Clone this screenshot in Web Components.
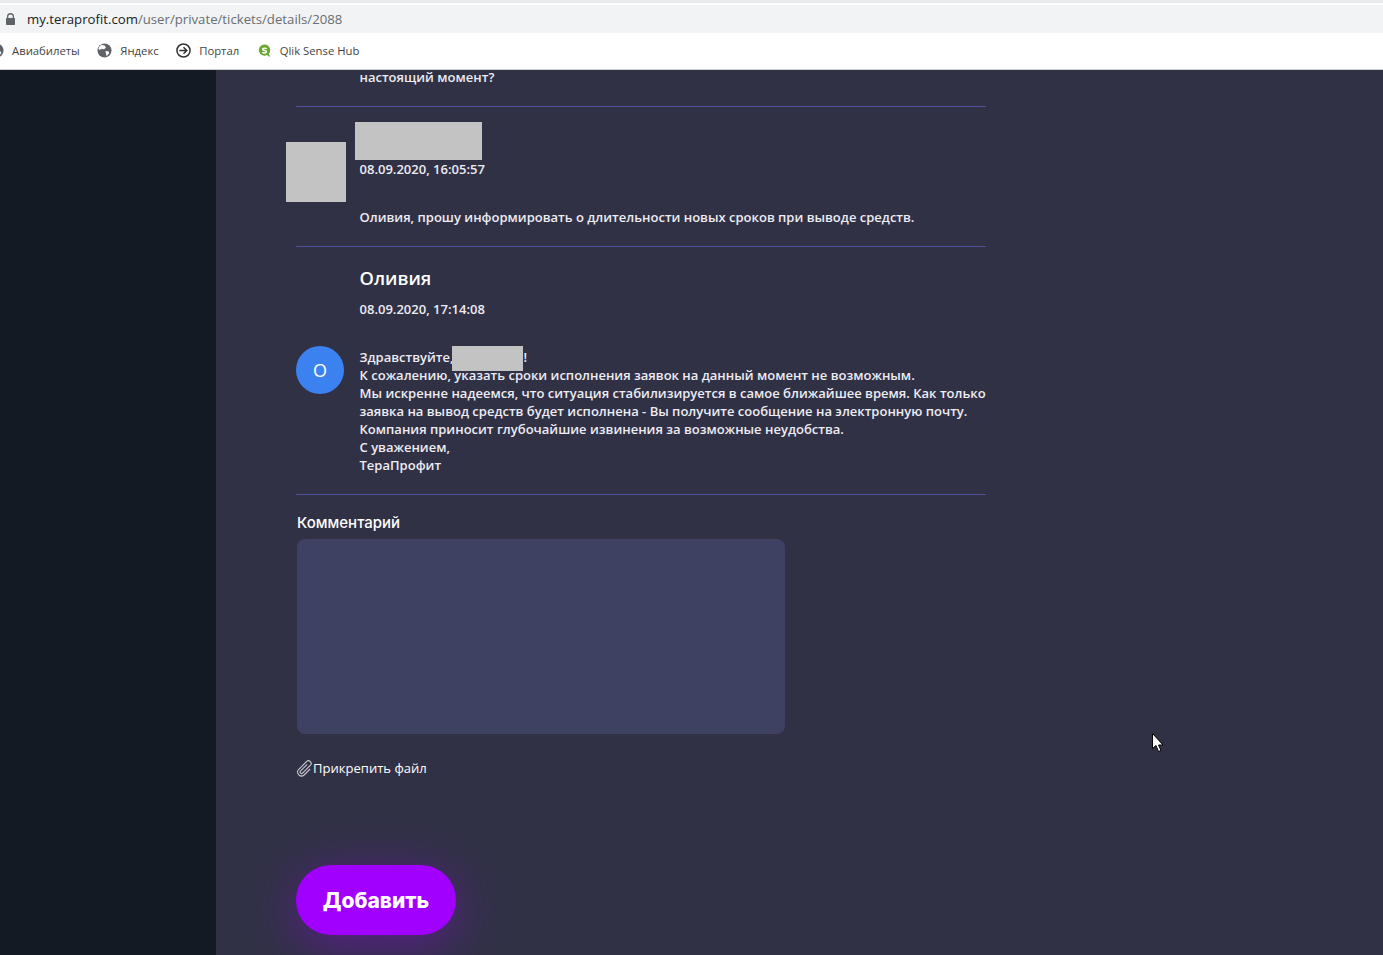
<!DOCTYPE html>
<html lang="ru">
<head>
<meta charset="utf-8">
<title>Ticket 2088</title>
<style>
  html, body { margin: 0; height: 100%; overflow: hidden; }
  body { display: flex; flex-direction: column; height: 955px; background: #313146; }
</style>
</head>
<body>
<browser-chrome></browser-chrome>
<page-shell>
  <ticket-message body-only>настоящий момент?</ticket-message>
  <ticket-message>
    <redact-box slot="avatar" class="face" style="--w:60px;--h:60px;--x:-10px;--y:-66px"></redact-box>
    <span slot="name"><redact-box style="--w:127px;--h:38px;--x:-5px;--y:-4px"></redact-box></span>
    <span slot="date">08.09.2020, 16:05:57</span>
    Оливия, прошу информировать о длительности новых сроков при выводе средств.
  </ticket-message>
  <ticket-message>
    <user-avatar slot="avatar">О</user-avatar>
    <span slot="name">Оливия</span>
    <span slot="date">08.09.2020, 17:14:08</span>
    Здравствуйте,<redact-box style="--w:71px;--h:25px;--x:-2px;--y:-2px" inline></redact-box>!<br>
    К сожалению, указать сроки исполнения заявок на данный момент не возможным.<br>
    Мы искренне надеемся, что ситуация стабилизируется в самое ближайшее время. Как только<br>
    заявка на вывод средств будет исполнена - Вы получите сообщение на электронную почту.<br>
    Компания приносит глубочайшие извинения за возможные неудобства.<br>
    С уважением,<br>
    ТераПрофит
  </ticket-message>
  <comment-form></comment-form>
</page-shell>
<mouse-pointer></mouse-pointer>

<script>
class BrowserChrome extends HTMLElement {
  constructor() {
    super();
    this.attachShadow({ mode: 'open' });
  }

  connectedCallback() {
    this.shadowRoot.innerHTML = `
      <style>
        :host {
          display: block;
          flex: none;
          height: 70px;
          box-sizing: border-box;
          background: #fff;
          border-bottom: 1px solid #d0d1d3;
          font-family: "Open Sans", "Liberation Sans", sans-serif;
          overflow: hidden;
        }
        .top { height: 3px; background: #e9eaed; }
        .url {
          display: flex;
          align-items: center;
          height: 28px;
          margin: 2px 0 0 -10px;
          padding-left: 16px;
          background: #f1f3f4;
          border-radius: 14px 0 0 14px;
          font-size: 13.2px;
          color: #6a6d71;
        }
        .url svg { width: 9px; height: 12px; margin-right: 12px; flex: none; }
        .url b { font-weight: 400; color: #202124; }
        .marks {
          display: flex;
          align-items: center;
          height: 34px;
          margin-left: -11px;
          font-size: 11.3px;
          color: #444;
        }
        .mark { display: flex; align-items: center; gap: 8px; margin-right: 17.5px; }
        .mark svg { width: 15px; height: 15px; flex: none; }
      </style>
      <div class="top"></div>
      <div class="url">
        <svg viewBox="0 0 9 12"><path fill="#5f6368" d="M1 5V3.600a3.500 3.500 0 0 1 7 0V5h.4c.3 0 .6.3.6.6v5.600c0 .4-.3.8-.7.8H.7c-.4 0-.7-.4-.7-.8V5.600c0-.3.3-.6.6-.6zm1.300 0h4.400V3.600a2.200 2.200 0 0 0-4.400 0z"/></svg>
        <span><b>my.teraprofit.com</b>/user/private/tickets/details/2088</span>
      </div>
      <div class="marks">
        <span class="mark">${this.globe()}Авиабилеты</span>
        <span class="mark">${this.globe()}Яндекс</span>
        <span class="mark">
          <svg viewBox="0 0 16 16" fill="none" stroke="#333" stroke-width="1.600"><circle cx="8" cy="8" r="7"/><path d="M3.500 8h8M8 4.500 11.500 8 8 11.500"/></svg>Портал</span>
        <span class="mark">
          <svg viewBox="0 0 16 16"><path fill="#6aa82f" d="M8 1.500a6 6 0 1 0 2.600 11.400l2 1.600h1.600l-1.800-2.900A6 6 0 0 0 8 1.500z"/><path fill="none" stroke="#fff" stroke-width="1.500" d="M10.300 6.200C9.800 5.400 6 5 6 6.700c0 1.700 4.200 1 4.200 2.700 0 1.700-3.700 1.500-4.500.5"/></svg>Qlik Sense Hub</span>
      </div>
    `;
  }

  globe() {
    return `<svg viewBox="0 0 16 16"><circle cx="8" cy="8" r="7.500" fill="#5f6368"/><path fill="#fff" d="M5 1.800 8.500 3l1 2-2 1.600L5 6 3 7.500 1.500 6C2 4 3.300 2.600 5 1.800zM9 8.500l3.500.5.500 2-2.800 3L9.500 11z"/></svg>`;
  }
}

class PageShell extends HTMLElement {
  constructor() {
    super();
    this.attachShadow({ mode: 'open' });
  }

  connectedCallback() {
    this.shadowRoot.innerHTML = `
      <style>
        :host {
          display: flex;
          flex: 1;
          min-height: 0;
          overflow: hidden;
          background: #313146;
        }
        .side { flex: none; width: 216px; background: #131a24; }
        .content { width: 690px; margin-left: 80px; }
      </style>
      <div class="side"></div>
      <div class="content"><slot></slot></div>
    `;
  }
}

class TicketMessage extends HTMLElement {
  constructor() {
    super();
    this.attachShadow({ mode: 'open' });
  }

  connectedCallback() {
    this.shadowRoot.innerHTML = `
      <style>
        :host {
          display: grid;
          grid-template-columns: 63.5px 1fr;
          box-sizing: border-box;
          padding: 19px 0 20px;
          border-bottom: 1px solid #50509c;
          font-family: "Open Sans", "Liberation Sans", sans-serif;
          font-size: 13.03px;
          font-weight: 600;
          line-height: 18px;
          color: #ececf2;
        }
        /* tail of the previous message, scrolled under the browser bar */
        :host([body-only]) { padding: 0 0 22px; line-height: 14px; }
        :host([body-only]) .head, :host([body-only]) .date { display: none; }
        .head {
          grid-column: 2;
          height: 27px;
          margin-bottom: 7px;
          font-size: 18.3px;
          line-height: 24px;
          color: #fff;
        }
        .date { grid-column: 2; margin-bottom: 30px; }
        .pic { grid-column: 1; }
        .body { grid-column: 2; }
      </style>
      <div class="head"><slot name="name"></slot></div>
      <div class="date"><slot name="date"></slot></div>
      <div class="pic"><slot name="avatar"></slot></div>
      <div class="body"><slot></slot></div>
    `;
  }
}

class UserAvatar extends HTMLElement {
  constructor() {
    super();
    this.attachShadow({ mode: 'open' });
  }

  connectedCallback() {
    this.shadowRoot.innerHTML = `
      <style>
        :host {
          display: flex;
          align-items: center;
          justify-content: center;
          width: 48px;
          height: 48px;
          margin-top: -2px;
          border-radius: 50%;
          background: #3b82f0;
          color: #fff;
          font-family: "Open Sans", "Liberation Sans", sans-serif;
          font-size: 18px;
          font-weight: 400;
        }
      </style>
      <slot></slot>
    `;
  }
}

// grey boxes hiding personal data, they sit on top of the text
class RedactBox extends HTMLElement {
  constructor() {
    super();
    this.attachShadow({ mode: 'open' });
  }

  connectedCallback() {
    this.shadowRoot.innerHTML = `
      <style>
        :host {
          display: block;
          position: relative;
          width: 0;
          height: 0;
        }
        :host([inline]) {
          display: inline-block;
          width: calc(var(--w) - 1px);
          vertical-align: top;
        }
        div {
          position: absolute;
          left: var(--x);
          top: var(--y);
          width: var(--w);
          height: var(--h);
          background: #c3c3c3;
        }
      </style>
      <div></div>
    `;
  }
}

class CommentForm extends HTMLElement {
  constructor() {
    super();
    this.attachShadow({ mode: 'open' });
  }

  connectedCallback() {
    this.shadowRoot.innerHTML = `
      <style>
        :host {
          display: block;
          font-family: "Open Sans", "Liberation Sans", sans-serif;
          color: #fff;
        }
        label {
          display: block;
          margin: 18px 0 6px 1px;
          font-family: Inter, "Open Sans", sans-serif;
          font-size: 15px;
          font-weight: 500;
          line-height: 20px;
        }
        .box {
          display: block;
          box-sizing: border-box;
          width: 488px;
          height: 195px;
          margin-left: 1px;
          border: 0;
          border-radius: 8px;
          background: #3f4163;
        }
        .attach {
          display: flex;
          align-items: center;
          height: 20px;
          margin-top: 24px;
          font-size: 13.05px;
          color: #fff;
        }
        .attach svg { width: 17px; height: 17px; flex: none; }
        button {
          display: block;
          width: 160px;
          height: 70px;
          margin-top: 87px;
          padding: 0;
          border: 0;
          border-radius: 35px;
          background: #a100ff;
          box-shadow: 0 10px 50px rgba(161, 0, 255, .38);
          color: #fff;
          font-family: Inter, "Open Sans", sans-serif;
          font-size: 21px;
          font-weight: 800;
        }
      </style>
      <label>Комментарий</label>
      <div class="box"></div>
      <div class="attach">
        <svg viewBox="0 0 17 17" fill="none" stroke="#c9c9d2" stroke-width="1.100"><path d="M11.200 4.300 4.400 11.100a1.500 1.500 0 0 0 2.100 2.100l8-8a2.700 2.700 0 0 0-3.800-3.800L2.600 9.500a3.900 3.900 0 0 0 5.500 5.500l6-6"/></svg>
        <span>Прикрепить файл</span>
      </div>
      <button type="button">Добавить</button>
    `;
  }
}

class MousePointer extends HTMLElement {
  constructor() {
    super();
    this.attachShadow({ mode: 'open' });
  }

  connectedCallback() {
    this.shadowRoot.innerHTML = `
      <style>
        :host { position: absolute; left: 1152px; top: 733px; width: 13px; height: 20px; }
        svg { display: block; }
      </style>
      <svg width="13" height="20" viewBox="0 0 13 20"><path fill="#fff" stroke="#000" d="M.5.500v15l3.500-3 2.500 6 2.500-1-2.500-5.500h4.500z"/></svg>
    `;
  }
}

customElements.define('browser-chrome', BrowserChrome);
customElements.define('page-shell', PageShell);
customElements.define('ticket-message', TicketMessage);
customElements.define('user-avatar', UserAvatar);
customElements.define('redact-box', RedactBox);
customElements.define('comment-form', CommentForm);
customElements.define('mouse-pointer', MousePointer);
</script>
</body>
</html>
